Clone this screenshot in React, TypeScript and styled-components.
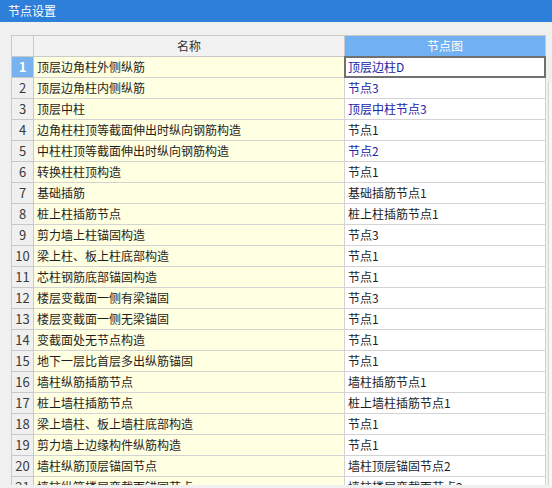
import { Fragment } from "react";
import styled, { createGlobalStyle } from "styled-components";

interface row {
  name: string;
  node: string;
  changed?: boolean;
}

const rows: row[] = [
  { name: "顶层边角柱外侧纵筋", node: "顶层边柱D", changed: true },
  { name: "顶层边角柱内侧纵筋", node: "节点3", changed: true },
  { name: "顶层中柱", node: "顶层中柱节点3", changed: true },
  { name: "边角柱柱顶等截面伸出时纵向钢筋构造", node: "节点1" },
  { name: "中柱柱顶等截面伸出时纵向钢筋构造", node: "节点2", changed: true },
  { name: "转换柱柱顶构造", node: "节点1" },
  { name: "基础插筋", node: "基础插筋节点1" },
  { name: "桩上柱插筋节点", node: "桩上柱插筋节点1" },
  { name: "剪力墙上柱锚固构造", node: "节点3" },
  { name: "梁上柱、板上柱底部构造", node: "节点1" },
  { name: "芯柱钢筋底部锚固构造", node: "节点1" },
  { name: "楼层变截面一侧有梁锚固", node: "节点3" },
  { name: "楼层变截面一侧无梁锚固", node: "节点1" },
  { name: "变截面处无节点构造", node: "节点1" },
  { name: "地下一层比首层多出纵筋锚固", node: "节点1" },
  { name: "墙柱纵筋插筋节点", node: "墙柱插筋节点1" },
  { name: "桩上墙柱插筋节点", node: "桩上墙柱插筋节点1" },
  { name: "梁上墙柱、板上墙柱底部构造", node: "节点1" },
  { name: "剪力墙上边缘构件纵筋构造", node: "节点1" },
  { name: "墙柱纵筋顶层锚固节点", node: "墙柱顶层锚固节点2" },
  { name: "墙柱纵筋楼层变截面锚固节点", node: "墙柱楼层变截面节点2" },
];

const GlobalStyle = createGlobalStyle`
  html, body {
    margin: 0;
    padding: 0;
    background: #f0f0f0;
    font-family: "Noto Sans CJK SC", "Liberation Sans", sans-serif;
  }
`;

const Window = styled.div`
  width: 552px;
  height: 488px;
  display: flex;
  flex-direction: column;
  overflow: hidden;
  background: #f0f0f0;
`;

const TitleBar = styled.div`
  height: 22px;
  flex: none;
  background: #2e7fd9;
  color: #ffffff;
  font-size: 12px;
  line-height: 22px;
  padding-left: 8px;
`;

const Body = styled.div`
  display: flex;
  flex-direction: row;
  align-items: flex-start;
  gap: 2px;
  padding: 13px 0 0 11px;
`;

const Viewport = styled.div`
  width: 535px;
  height: 450px;
  overflow: hidden;
  flex: none;
`;

const Grid = styled.div`
  display: grid;
  grid-template-columns: 22px 311px 201px;
  grid-auto-rows: 21px;
  border-left: 1px solid #c9c9c9;
  border-top: 1px solid #c9c9c9;
`;

const Cell = styled.div`
  border-right: 1px solid #d3d3d3;
  border-bottom: 1px solid #d3d3d3;
  font-size: 12px;
  line-height: 20px;
  white-space: nowrap;
  overflow: hidden;
  position: relative;
`;

const HeadCell = styled(Cell)<{ $active?: boolean }>`
  text-align: center;
  background: ${(p) => (p.$active ? "#72b1f1" : "#f2f2f2")};
  color: ${(p) => (p.$active ? "#ffffff" : "#333333")};
  border-right-color: #c9c9c9;
  border-bottom-color: #c9c9c9;
`;

const IndexCell = styled(Cell)<{ $active?: boolean }>`
  text-align: center;
  font-size: 13px;
  background: ${(p) => (p.$active ? "#78b3ef" : "#f0f0f0")};
  color: ${(p) => (p.$active ? "#ffffff" : "#3a3a3a")};
  font-weight: ${(p) => (p.$active ? "bold" : "normal")};
  border-right-color: #c9c9c9;
  border-bottom-color: #c9c9c9;
`;

const NameCell = styled(Cell)`
  background: #ffffe1;
  color: #1e1e1e;
  padding-left: 3px;
`;

const NodeCell = styled(Cell)<{ $changed?: boolean; $selected?: boolean }>`
  background: #ffffff;
  color: ${(p) => (p.$changed ? "#2323a6" : "#1e1e1e")};
  padding-left: 3px;
  overflow: visible;
  ${(p) =>
    p.$selected &&
    `
    &::after {
      content: "";
      position: absolute;
      left: -1px;
      top: -1px;
      right: -1px;
      bottom: -1px;
      border: 2px solid #707070;
    }
  `}
`;

const ScrollTrack = styled.div`
  width: 17px;
  height: 450px;
  display: flex;
  flex-direction: column;
  padding-top: 47px;
  box-sizing: border-box;
  flex: none;
`;

const ScrollThumb = styled.div`
  flex: 1;
  border-left: 1px solid #d6d6d6;
  background: #f7f7f7;
`;

export default function App() {
  return (
    <>
      <GlobalStyle />
      <Window>
        <TitleBar>节点设置</TitleBar>
        <Body>
          <Viewport>
            <Grid>
              <HeadCell />
              <HeadCell>名称</HeadCell>
              <HeadCell $active>节点图</HeadCell>
              {rows.map((r, i) => (
                <Fragment key={i}>
                  <IndexCell $active={i === 0}>{i + 1}</IndexCell>
                  <NameCell>{r.name}</NameCell>
                  <NodeCell $changed={r.changed} $selected={i === 0}>
                    {r.node}
                  </NodeCell>
                </Fragment>
              ))}
            </Grid>
          </Viewport>
          <ScrollTrack>
            <ScrollThumb />
          </ScrollTrack>
        </Body>
      </Window>
    </>
  );
}
